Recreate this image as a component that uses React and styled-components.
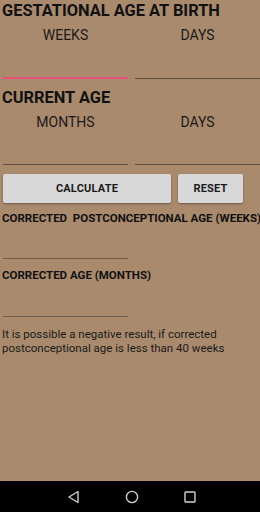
import React from "react"
import styled, { createGlobalStyle } from "styled-components"

const Global = createGlobalStyle`
  html, body {
    margin: 0;
    padding: 0;
    background: #a98a6d;
  }
  * { box-sizing: border-box; }
`

const Screen = styled.div`
  width: 260px;
  height: 512px;
  display: flex;
  flex-direction: column;
  background: #a98a6d;
  font-family: Roboto, "Liberation Sans", sans-serif;
  color: #111;
  overflow: hidden;
`

const Content = styled.div`
  flex: 1;
  display: flex;
  flex-direction: column;
  padding-top: 1px;
`

const Heading = styled.div`
  font-size: 16.4px;
  font-weight: 700;
  padding-left: 2px;
  line-height: 20px;
  white-space: nowrap;
  margin-top: ${p => p.$top || 0}px;
`

const Row = styled.div`
  display: flex;
  gap: 7px;
  padding: 0 0 0 3px;
`

const Col = styled.div`
  flex: 1;
  display: flex;
  flex-direction: column;
  align-items: center;
`

const ColLabel = styled.div`
  font-size: 14px;
  line-height: 16px;
  margin-top: 6px;
  color: #1a1a1a;
`

const Field = styled.div`
  align-self: stretch;
  height: ${p => p.$h || 36}px;
  border-bottom: ${p => (p.$active ? "2px solid #e8507a" : "1px solid #5e4e3f")};
`

const Buttons = styled.div`
  display: flex;
  gap: 7px;
  padding: 0 3px;
  margin-top: 9px;
`

const Button = styled.button`
  width: ${p => p.$w}px;
  height: 29px;
  border: none;
  border-radius: 2px;
  background: #d8d8d8;
  box-shadow: 0 1px 2px rgba(0, 0, 0, 0.35);
  font-family: Roboto, "Liberation Sans", sans-serif;
  font-size: 11px;
  font-weight: 700;
  color: #1a1a1a;
  letter-spacing: 0.2px;
  padding: 0;
`

const Label = styled.div`
  font-size: 11.5px;
  font-weight: 700;
  line-height: 13px;
  padding-left: 2px;
  margin-top: ${p => p.$top}px;
  white-space: pre;
`

const Result = styled.div`
  width: 125px;
  margin-left: 3px;
  height: ${p => p.$h}px;
  border-bottom: 1px solid #6e5d4c;
`

const Note = styled.div`
  font-size: 11.5px;
  line-height: 14px;
  padding-left: 2px;
  margin-top: 10px;
  color: #1a1a1a;
`

const NavBar = styled.div`
  height: 31px;
  background: #000;
  display: flex;
  align-items: center;
  justify-content: center;
  gap: 40px;
  padding-left: 4px;
`

const NavIcon = styled.svg`
  width: 18px;
  height: 18px;
`

const App = () => (
  <Screen>
    <Global />
    <Content>
      <Heading>GESTATIONAL AGE AT BIRTH</Heading>
      <Row>
        <Col>
          <ColLabel>WEEKS</ColLabel>
          <Field $active />
        </Col>
        <Col>
          <ColLabel>DAYS</ColLabel>
          <Field />
        </Col>
      </Row>
      <Heading $top={9}>CURRENT AGE</Heading>
      <Row>
        <Col>
          <ColLabel>MONTHS</ColLabel>
          <Field $h={35} />
        </Col>
        <Col>
          <ColLabel>DAYS</ColLabel>
          <Field $h={35} />
        </Col>
      </Row>
      <Buttons>
        <Button $w={168}>CALCULATE</Button>
        <Button $w={65}>RESET</Button>
      </Buttons>
      <Label $top={9}>CORRECTED  POSTCONCEPTIONAL AGE (WEEKS)</Label>
      <Result $h={34} />
      <Label $top={10}>CORRECTED AGE (MONTHS)</Label>
      <Result $h={35} />
      <Note>
        It is possible a negative result, if corrected
        <br />
        postconceptional age is less than 40 weeks
      </Note>
    </Content>
    <NavBar>
      <NavIcon viewBox="0 0 18 18">
        <path d="M13 3.5 L4 9 L13 14.5 Z" fill="none" stroke="#cfcfcf" strokeWidth="1.4" strokeLinejoin="round" />
      </NavIcon>
      <NavIcon viewBox="0 0 18 18">
        <circle cx="9" cy="9" r="5.6" fill="none" stroke="#cfcfcf" strokeWidth="1.4" />
      </NavIcon>
      <NavIcon viewBox="0 0 18 18">
        <rect x="4" y="4" width="10" height="10" rx="0.8" fill="none" stroke="#cfcfcf" strokeWidth="1.4" />
      </NavIcon>
    </NavBar>
  </Screen>
)

export default App
